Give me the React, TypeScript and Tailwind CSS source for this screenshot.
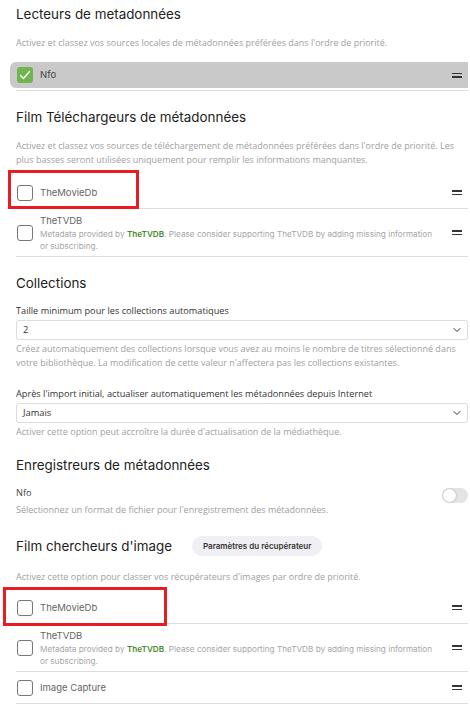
import { ChevronDown } from 'lucide-react';

type Source = { name: string; note?: boolean };

function DragHandle() {
  return (
    <div className="flex w-[10px] flex-col gap-[2px] shrink-0">
      <span className="h-[1.5px] bg-[#333]" />
      <span className="h-[1.5px] bg-[#333]" />
    </div>
  );
}

function Checkbox({ checked }: { checked?: boolean }) {
  if (checked) {
    return (
      <div className="w-4 h-4 rounded-[3px] bg-[#6fb64f] flex items-center justify-center shrink-0">
        <svg className="w-3 h-3" viewBox="0 0 12 12" fill="none" stroke="white" strokeWidth={1.3}>
          <path d="M1.5 6.5l3 3 6-7" strokeLinecap="round" strokeLinejoin="round" />
        </svg>
      </div>
    );
  }
  return <div className="w-4 h-4 rounded-[3px] border border-[#777] bg-white shrink-0" />;
}

// red outline drawn over a row to call it out
function Callout({ className }: { className: string }) {
  return <div className={`absolute h-[39px] border-[3px] border-[#e91c24] pointer-events-none ${className}`} />;
}

function SourceRow({ source, callout }: { source: Source; callout?: string }) {
  return (
    <div className="relative">
      <div className={`flex items-center gap-[7px] border-b border-[#dcdcdc] pl-[1px] pr-[6px] ${source.note ? 'h-[48px]' : 'h-[32px]'}`}>
        <Checkbox />
        <div className="flex-1 min-w-0">
          <div className="text-[9.5px] leading-[14px] text-[#666]">{source.name}</div>
          {source.note && (
            <div className="text-[8.2px] leading-[12px] text-[#a6a6a6] pr-[8px]">
              Metadata provided by <span className="font-semibold text-[#4a8a2e]">TheTVDB</span>. Please consider supporting TheTVDB by adding missing information or subscribing.
            </div>
          )}
        </div>
        <DragHandle />
      </div>
      {callout && <Callout className={callout} />}
    </div>
  );
}

function SelectField({ value }: { value: string }) {
  return (
    <div className="h-[20px] border border-[#dcdcdc] rounded-[3px] flex items-center pl-[6px] pr-[4px] text-[9.3px] text-[#333] font-['Open_Sans',sans-serif]">
      <span className="flex-1">{value}</span>
      <ChevronDown className="w-3 h-3 text-[#333]" strokeWidth={2} />
    </div>
  );
}

const help = "text-[9px] leading-[14px] text-[#a0a0a0] font-['Open_Sans',sans-serif]";
const label = "block text-[9.2px] leading-[14px] text-[#333] font-['Open_Sans',sans-serif]";
const heading = 'text-[13.4px] font-normal leading-[18px] text-[#222]';

export default function App() {
  return (
    <div className="w-[470px] h-[706px] overflow-hidden bg-white pl-4 pr-[2px] font-['Inter',sans-serif] text-[#222]">
      <h2 className={`pt-[5px] ${heading}`}>Lecteurs de metadonnées</h2>
      <p className={`mt-[13px] ${help}`}>
        Activez et classez vos sources locales de métadonnées préférées dans l'ordre de priorité.
      </p>
      <div className="mt-[12px] border-b border-[#dcdcdc] pb-[2px]">
        <div className="-ml-[6px] h-[26px] bg-[#c9c9c9] rounded-l-[6px] flex items-center gap-[7px] pl-[7px] pr-[6px]">
          <Checkbox checked />
          <span className="flex-1 text-[9.5px] text-[#444]">Nfo</span>
          <DragHandle />
        </div>
      </div>

      <h2 className={`mt-[17px] ${heading}`}>Film Téléchargeurs de métadonnées</h2>
      <p className={`mt-[13px] ${help}`}>
        Activez et classez vos sources de téléchargement de métadonnées préférées dans l'ordre de priorité. Les plus basses seront utilisées uniquement pour remplir les informations manquantes.
      </p>
      <div className="mt-[10px]">
        <SourceRow source={{ name: 'TheMovieDb' }} callout="-left-[8px] -top-[7px] w-[131px]" />
        <SourceRow source={{ name: 'TheTVDB', note: true }} />
      </div>

      <h2 className={`mt-[17px] ${heading}`}>Collections</h2>
      <label className={`mt-[12px] ${label}`}>Taille minimum pour les collections automatiques</label>
      <div className="mt-[2px]">
        <SelectField value="2" />
      </div>
      <p className={`mt-[2px] ${help}`}>
        Créez automatiquement des collections lorsque vous avez au moins le nombre de titres sélectionné dans votre bibliothèque. La modification de cette valeur n'affectera pas les collections existantes.
      </p>
      <label className={`mt-[17px] ${label}`}>Après l'import initial, actualiser automatiquement les métadonnées depuis Internet</label>
      <div className="mt-[2px]">
        <SelectField value="Jamais" />
      </div>
      <p className={`mt-[2px] ${help}`}>
        Activer cette option peut accroître la durée d'actualisation de la médiathèque.
      </p>

      <h2 className={`mt-[17px] ${heading}`}>Enregistreurs de métadonnées</h2>
      <div className="mt-[12px] flex items-start">
        <div className="flex-1">
          <div className={`${label} text-[#444]`}>Nfo</div>
          <div className={`mt-[3px] ${help}`}>
            Sélectionnez un format de fichier pour l'enregistrement des métadonnées.
          </div>
        </div>
        <div className="mt-[2px] w-[26px] h-[15px] rounded-full bg-[#e4e4e4] flex items-center px-[1px]">
          <span className="w-[13px] h-[13px] rounded-full bg-white shadow-[0_0_2px_rgba(0,0,0,0.35)]" />
        </div>
      </div>

      <div className="mt-[19px] flex items-center gap-[20px]">
        <h2 className={heading}>Film chercheurs d'image</h2>
        <button className="h-[20px] px-[11px] rounded-full bg-[#f0f0f4] text-[8px] font-semibold text-[#333]">
          Paramètres du récupérateur
        </button>
      </div>
      <p className={`mt-[14px] ${help}`}>
        Activez cette option pour classer vos récupérateurs d'images par ordre de priorité.
      </p>
      <div className="mt-[8px]">
        <SourceRow source={{ name: 'TheMovieDb' }} callout="-left-[13px] -top-[5px] w-[164px]" />
        <SourceRow source={{ name: 'TheTVDB', note: true }} />
        <SourceRow source={{ name: 'Image Capture' }} />
      </div>
    </div>
  );
}
